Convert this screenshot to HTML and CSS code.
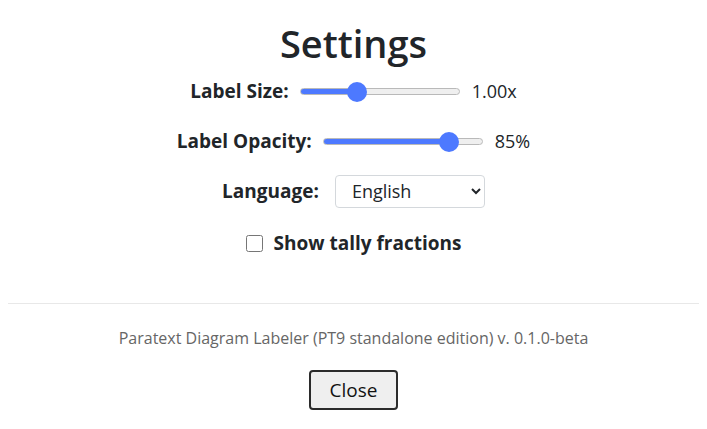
FILE: index.html
```html
<!DOCTYPE html>
<html>
<head>
<meta charset="utf-8">
<link rel="stylesheet" href="styles.css">
</head>
<body>
<div class="panel">
  <h1 class="title">Settings</h1>
  <div class="row">
    <label class="lbl">Label Size:</label>
    <input class="range" type="range" min="0.5" max="2" step="0.01" value="1" style="--fill: 57px">
    <span class="val">1.00x</span>
  </div>
  <div class="row">
    <label class="lbl">Label Opacity:</label>
    <input class="range" type="range" min="10" max="100" value="85" style="--fill: 127px">
    <span class="val">85%</span>
  </div>
  <div class="row lang-row">
    <label class="lbl">Language:</label>
    <select class="sel"><option>English</option></select>
  </div>
  <div class="row check-row">
    <input class="chk" type="checkbox" id="tally">
    <label class="lbl" for="tally">Show tally fractions</label>
  </div>
  <hr class="divider">
  <p class="footer">Paratext Diagram Labeler (PT9 standalone edition) v. 0.1.0-beta</p>
  <div class="actions"><button class="btn">Close</button></div>
</div>
</body>
</html>
```
FILE: styles.css
```css
html, body { margin: 0; padding: 0; background: #fff; }
body { font-family: "Open Sans", "Noto Sans", sans-serif; color: #212529; }
.panel { padding: 0 8px; display: flex; flex-direction: column; align-items: center; }
.title { font-size: 38px; font-weight: 600; margin: 20px 0 0; line-height: 46px; }
.row { display: flex; align-items: center; gap: 11px; height: 50px; font-size: 19px; }
.lbl { font-weight: 700; }
.range { -webkit-appearance: none; appearance: none; width: 160px; height: 20px; margin: 0; background: transparent; }
.range::-webkit-slider-runnable-track {
  height: 7px; border: 1px solid #b9b9b9; border-radius: 5px;
  background: linear-gradient(to right, #4d79ff 0, #4d79ff var(--fill), #efefef var(--fill), #efefef 100%);
}
.range::-webkit-slider-thumb {
  -webkit-appearance: none; appearance: none; width: 20px; height: 20px; border-radius: 50%;
  background: #4d79ff; border: 0; margin-top: -6.5px;
}
.val { font-size: 18px; margin-left: 1px; }
.lang-row { gap: 16px; }
.sel { width: 150px; height: 33px; font-family: inherit; font-size: 18px; padding: 0 0 0 12px; border: 1px solid #d4d8dc; border-radius: 4px; background: #fff; color: #212529; }
.check-row { margin-top: 2px; }
.chk { width: 17px; height: 17px; margin: 0; }
.divider { align-self: stretch; border: 0; border-top: 1px solid #e8e8e8; margin: 35px 0 0; }
.footer { font-size: 16px; color: #666; margin: 23px 0 0; line-height: 22px; }
.actions { margin-top: 21px; }
.btn { font-family: inherit; font-size: 19px; line-height: 26px; width: 89px; height: 40px; padding: 0; background: #efefef; border: 2px solid #2b2b2b; border-radius: 4px; color: #111; }
```
